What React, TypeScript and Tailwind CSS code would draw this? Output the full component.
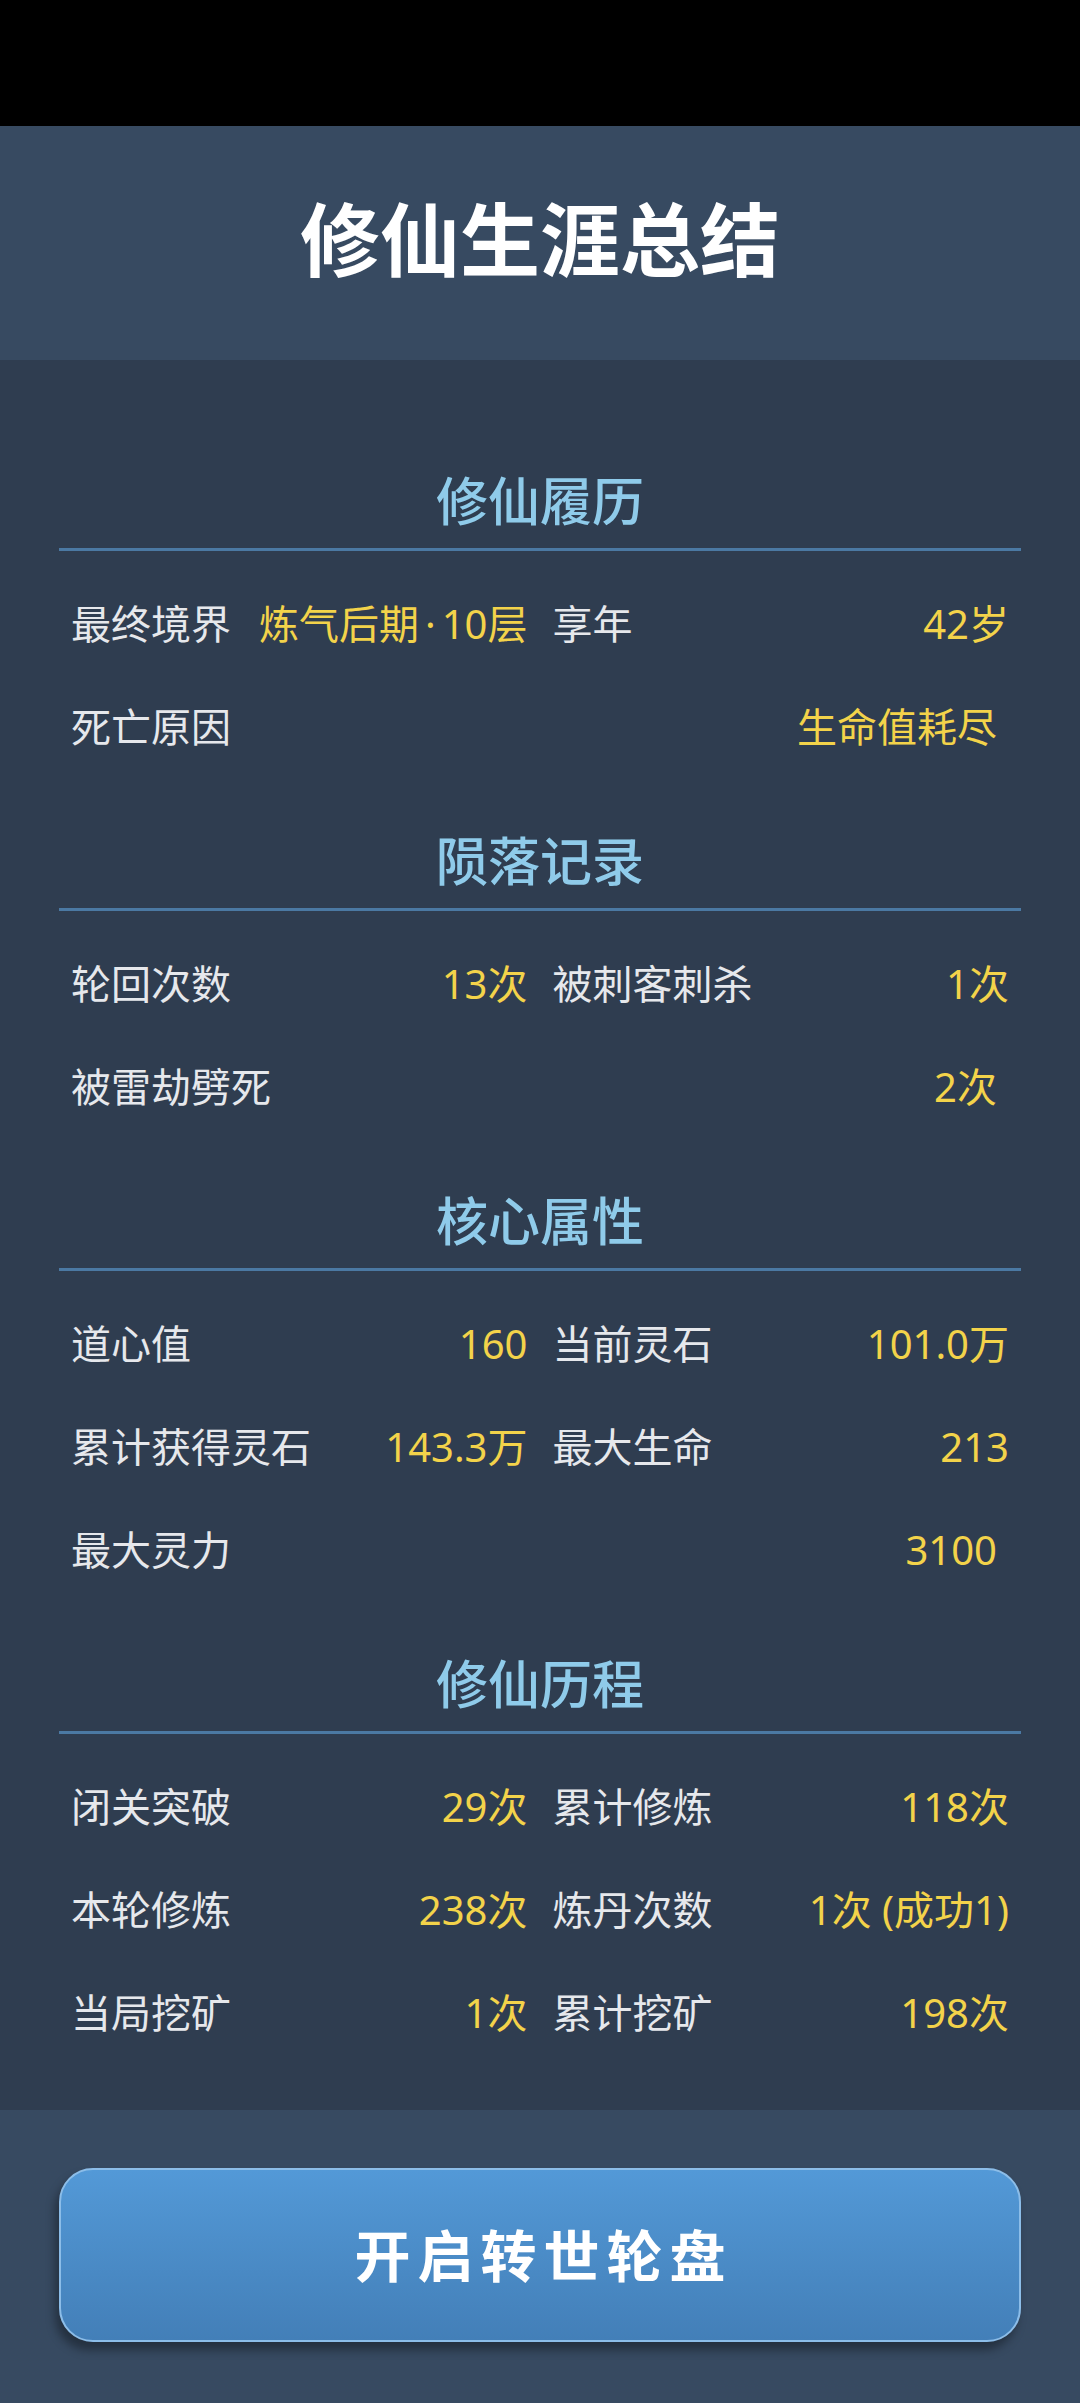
import React from "react";

type Item = { label: string; value: React.ReactNode; full?: boolean };

const sections: { title: string; items: Item[] }[] = [
  {
    title: "修仙履历",
    items: [
      {
        label: "最终境界",
        value: (
          <>
            炼气后期<span className="mx-[6px]">·</span>10层
          </>
        ),
      },
      { label: "享年", value: "42岁" },
      { label: "死亡原因", value: "生命值耗尽", full: true },
    ],
  },
  {
    title: "陨落记录",
    items: [
      { label: "轮回次数", value: "13次" },
      { label: "被刺客刺杀", value: "1次" },
      { label: "被雷劫劈死", value: "2次", full: true },
    ],
  },
  {
    title: "核心属性",
    items: [
      { label: "道心值", value: "160" },
      { label: "当前灵石", value: "101.0万" },
      { label: "累计获得灵石", value: "143.3万" },
      { label: "最大生命", value: "213" },
      { label: "最大灵力", value: "3100", full: true },
    ],
  },
  {
    title: "修仙历程",
    items: [
      { label: "闭关突破", value: "29次" },
      { label: "累计修炼", value: "118次" },
      { label: "本轮修炼", value: "238次" },
      { label: "炼丹次数", value: "1次 (成功1)" },
      { label: "当局挖矿", value: "1次" },
      { label: "累计挖矿", value: "198次" },
    ],
  },
];

export default function App() {
  return (
    <div
      className="min-h-screen w-full bg-[#2f3d50] flex flex-col"
      style={{ fontFamily: '"Noto Sans", "Noto Sans CJK SC", sans-serif' }}
    >
      <div className="h-[126px] bg-black" />
      <header className="h-[234px] bg-[#374a61] flex items-center justify-center pb-[8px]">
        <h1 className="text-[80px] leading-none font-bold text-white">修仙生涯总结</h1>
      </header>
      <main className="bg-[#2f3d50] px-[59px] pt-[110px] pb-[42px] flex flex-col gap-[48px]">
        {sections.map((s) => (
          <section key={s.title} className="flex flex-col">
            <h2 className="h-[62px] text-[52px] leading-[62px] font-medium text-[#8fcbea] text-center">
              {s.title}
            </h2>
            <div className="mt-[16px] h-[3px] bg-[#4b79a3]" />
            <div className="mt-[25px] px-[12px] grid grid-cols-2 gap-x-[25px]">
              {s.items.map((it) => (
                <div
                  key={it.label}
                  className={
                    it.full
                      ? "col-span-2 h-[103px] flex items-center justify-between pr-[12px] pb-[8px]"
                      : "h-[103px] flex items-center justify-between pb-[8px]"
                  }
                >
                  <span className="text-[40px] leading-none text-[#e6e8ec] whitespace-nowrap">
                    {it.label}
                  </span>
                  <span className="text-[40px] leading-none text-[#f3d34a] whitespace-nowrap">
                    {it.value}
                  </span>
                </div>
              ))}
            </div>
          </section>
        ))}
      </main>
      <footer className="flex-1 bg-[#374a61] px-[59px] pt-[58px] pb-[60px]">
        <button className="w-full h-[174px] rounded-[34px] border-2 border-[#8cbde8] bg-gradient-to-b from-[#5399d7] to-[#437fb8] shadow-[-4px_8px_10px_rgba(0,0,0,0.35)] flex items-center justify-center">
          <span className="text-[56px] leading-none font-bold text-white tracking-[7px] pl-[7px]">
            开启转世轮盘
          </span>
        </button>
      </footer>
    </div>
  );
}
